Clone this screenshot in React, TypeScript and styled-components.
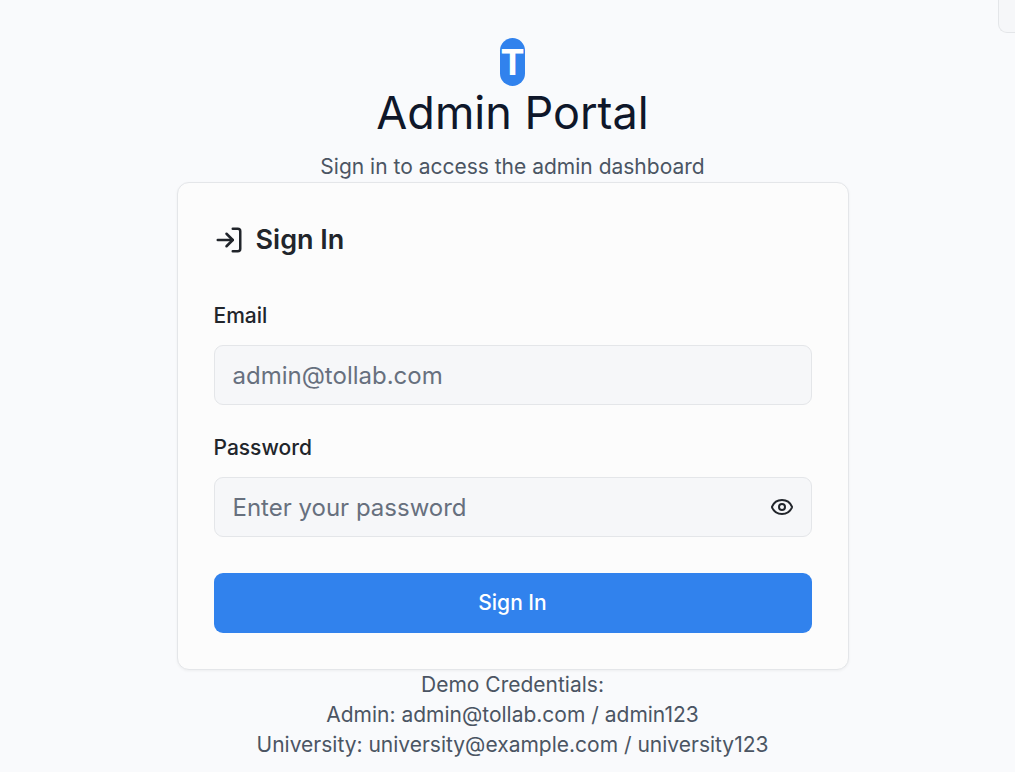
import React, { useState } from "react";
import styled, { createGlobalStyle } from "styled-components";
import { Eye, EyeOff, LogIn } from "lucide-react";

const GlobalStyle = createGlobalStyle`
  *, *::before, *::after { box-sizing: border-box; }
  body {
    margin: 0;
    background: #f9fafc;
    color: #21252b;
    font-family: Inter, "Liberation Sans", sans-serif;
  }
  h1, h2, p { margin: 0; }
  button, input { font: inherit; color: inherit; }
`;

const Page = styled.main`
  display: flex;
  flex-direction: column;
  align-items: center;
  min-height: 100vh;
  padding: 38px 0 12px 10px;
  overflow: hidden;
`;

const CornerButton = styled.button`
  position: absolute;
  top: 0;
  right: 0;
  width: 17px;
  height: 33px;
  padding: 0;
  border: 1px solid #e4e6e9;
  border-width: 0 0 1px 1px;
  border-radius: 0 0 0 9px;
  background: #f6f7f9;
`;

const Header = styled.header`
  display: flex;
  flex-direction: column;
  align-items: center;
  text-align: center;
`;

const Logo = styled.span`
  border-radius: 24px;
  background: #3182ed;
  color: #ffffff;
  font-size: 36px;
  font-weight: 700;
  line-height: 48px;
`;

const Title = styled.h1`
  color: #0f172a;
  font-size: 45px;
  font-weight: 400;
  line-height: 54px;
`;

const Muted = styled.p`
  color: #4b5563;
  font-size: 21px;
  line-height: 30px;
  text-align: center;
`;

const Subtitle = styled(Muted)`
  margin-top: 12px;
`;

const Card = styled.section`
  width: 100%;
  max-width: 672px;
  padding: 36px;
  border: 1px solid #e4e6e9;
  border-radius: 12px;
  background: #fcfcfc;
  box-shadow: 0 1px 3px rgba(0, 0, 0, 0.05);
`;

const CardTitle = styled.h2`
  display: flex;
  align-items: center;
  gap: 12px;
  font-size: 27px;
  font-weight: 600;
  line-height: 42px;
`;

const Form = styled.form`
  display: flex;
  flex-direction: column;
  gap: 28px;
  margin-top: 40px;
`;

const Field = styled.div`
  display: flex;
  flex-direction: column;
  gap: 14px;
`;

const Label = styled.label`
  font-size: 21px;
  font-weight: 500;
  line-height: 30px;
`;

const InputFrame = styled.div`
  display: flex;
  align-items: center;
  height: 60px;
  border: 1px solid #e4e6e9;
  border-radius: 9px;
  background: #f6f7f9;
`;

const Input = styled.input`
  flex: 1;
  min-width: 0;
  height: 100%;
  padding: 0 18px;
  border: 0;
  border-radius: 9px;
  background: transparent;
  font-size: 24px;

  &::placeholder { color: #67707e; opacity: 1; }
`;

const EyeButton = styled.button`
  display: flex;
  padding: 0 17px;
  border: 0;
  background: transparent;
`;

const SubmitButton = styled.button`
  height: 60px;
  margin-top: 8px;
  border: 0;
  border-radius: 9px;
  background: #3182ed;
  color: #ffffff;
  font-size: 21px;
  font-weight: 500;
  line-height: 30px;
`;

export default function App() {
  const [visible, setVisible] = useState(false);

  return (
    <>
      <GlobalStyle />
      <CornerButton type="button" aria-label="Menu" />
      <Page>
        <Header>
          <Logo>T</Logo>
          <Title>Admin Portal</Title>
          <Subtitle>Sign in to access the admin dashboard</Subtitle>
        </Header>
        <Card>
          <CardTitle>
            <LogIn size={30} />
            Sign In
          </CardTitle>
          <Form onSubmit={(event) => event.preventDefault()}>
            <Field>
              <Label htmlFor="email">Email</Label>
              <InputFrame>
                <Input id="email" type="email" placeholder="admin@tollab.com" />
              </InputFrame>
            </Field>
            <Field>
              <Label htmlFor="password">Password</Label>
              <InputFrame>
                <Input
                  id="password"
                  type={visible ? "text" : "password"}
                  placeholder="Enter your password"
                />
                <EyeButton
                  type="button"
                  aria-label="Toggle password visibility"
                  onClick={() => setVisible(!visible)}
                >
                  {visible ? <EyeOff size={24} /> : <Eye size={24} />}
                </EyeButton>
              </InputFrame>
            </Field>
            <SubmitButton type="submit">Sign In</SubmitButton>
          </Form>
        </Card>
        <footer>
          <Muted>Demo Credentials:</Muted>
          <Muted>Admin: admin@tollab.com / admin123</Muted>
          <Muted>University: university@example.com / university123</Muted>
        </footer>
      </Page>
    </>
  );
}
